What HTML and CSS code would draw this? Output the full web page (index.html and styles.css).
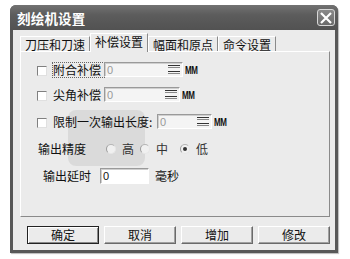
FILE: index.html
```html
<!DOCTYPE html>
<html>
<head>
<meta charset="utf-8">
<link rel="stylesheet" href="styles.css">
</head>
<body>
<div class="window">
  <div class="titlebar">
    <span class="title">刻绘机设置</span>
    <span class="close"><svg width="14" height="12" viewBox="0 0 14 12"><path d="M2 1 L12 11 M12 1 L2 11" stroke="#fff" stroke-width="2.2" fill="none"/></svg></span>
  </div>
  <div class="client">
    <div class="tabs">
      <div class="tab">刀压和刀速</div>
      <div class="tab active">补偿设置</div>
      <div class="tab">幅面和原点</div>
      <div class="tab">命令设置</div>
    </div>
    <div class="panel">
      <div class="watermark"><span class="wm-bag"></span></div>
      <div class="row r1">
        <span class="check"></span>
        <span class="label focus w1">附合补偿</span>
        <span class="field f1"><span class="val">0</span><span class="spin"><i></i><i></i></span></span>
        <span class="unit">MM</span>
      </div>
      <div class="row r2">
        <span class="check"></span>
        <span class="label w1">尖角补偿</span>
        <span class="field f2"><span class="val">0</span><span class="spin"><i></i><i></i></span></span>
        <span class="unit">MM</span>
      </div>
      <div class="row r3">
        <span class="check"></span>
        <span class="label w3">限制一次输出长度:</span>
        <span class="field f3"><span class="val">0</span><span class="spin"><i></i><i></i></span></span>
        <span class="unit">MM</span>
      </div>
      <div class="row r4">
        <span class="label w4">输出精度</span>
        <span class="radio"></span><span class="rlabel">高</span>
        <span class="radio"></span><span class="rlabel wide">中</span>
        <span class="radio on"></span><span class="rlabel">低</span>
      </div>
      <div class="row r5">
        <span class="label w5">输出延时</span>
        <span class="field f5"><span class="val dark">0</span></span>
        <span class="label ms">毫秒</span>
      </div>
    </div>
    <div class="buttons">
      <button class="btn">确定</button>
      <button class="btn">取消</button>
      <button class="btn">增加</button>
      <button class="btn">修改</button>
    </div>
  </div>
</div>
</body>
</html>
```

FILE: styles.css
```css
html, body {
  margin: 0;
  padding: 0;
  background: #ffffff;
  width: 350px;
  height: 259px;
  overflow: hidden;
  font-family: "Noto Sans CJK SC", "Liberation Sans", sans-serif;
  font-size: 12px;
  color: #111;
}
.window {
  margin: 5px 0 0 10px;
  width: 328px;
  height: 248px;
  background: #585858;
  border-radius: 6px 6px 0 0;
  box-sizing: border-box;
  padding: 0 3px 3px 3px;
  display: flex;
  flex-direction: column;
  box-shadow: 1px 1px 1px #bbb;
}
.titlebar {
  height: 25px;
  display: flex;
  align-items: center;
  justify-content: space-between;
  background: linear-gradient(#727272 0%, #5c5c5c 40%, #525252 100%);
  border-radius: 6px 6px 0 0;
  margin: 0 -3px;
  padding-left: 7px;
  padding-right: 3px;
}
.title {
  color: #fff;
  font-weight: bold;
  font-size: 13.5px;
  line-height: 16px;
  letter-spacing: 0.2px;
}
.close {
  width: 18px;
  height: 17px;
  border: 1px solid #d8d8d8;
  border-radius: 3px;
  background: linear-gradient(#8a8a8a, #6a6a6a);
  display: flex;
  align-items: center;
  justify-content: center;
  box-sizing: border-box;
}
.client {
  flex: 1;
  background: #ebebeb;
  padding: 4px 4px 0 7px;
  display: flex;
  flex-direction: column;
  position: relative;
}
.tabs {
  display: flex;
  height: 17px;
  align-items: flex-end;
  position: relative;
  z-index: 2;
}
.tab {
  height: 15px;
  line-height: 15px;
  padding: 0 4px;
  border-top: 1px solid #fff;
  border-left: 1px solid #fff;
  border-right: 1px solid #8a8a8a;
  font-size: 12px;
  color: #111;
  box-sizing: border-box;
  background: #ebebeb;
}
.tab.active {
  height: 19px;
  line-height: 16px;
  margin-bottom: -1px;
}
.panel {
  height: 166px;
  box-sizing: border-box;
  border-top: 1px solid #fff;
  border-left: 1px solid #fff;
  border-right: 1px solid #8a8a8a;
  border-bottom: 1px solid #8a8a8a;
  margin-right: 1px;
  padding: 10px 0 0 16px;
  display: flex;
  flex-direction: column;
  position: relative;
}
.row {
  display: flex;
  align-items: center;
  height: 15px;
  position: relative;
}
.r2 { margin-top: 10px; }
.r3 { margin-top: 12px; }
.r4 { margin-top: 12px; padding-left: 1px; }
.r5 { margin-top: 12px; height: 16px; padding-left: 6px; }
.check {
  width: 10px;
  height: 10px;
  box-sizing: border-box;
  background: #fff;
  border-top: 1px solid #808080;
  border-left: 1px solid #808080;
  border-right: 1px solid #e0e0e0;
  border-bottom: 1px solid #e0e0e0;
  margin-right: 6px;
  margin-top: 2px;
}
.label {
  line-height: 14px;
  white-space: nowrap;
  color: #111;
}
.focus {
  outline: 1px dotted #666;
  outline-offset: 0;
}
.w1 { width: 51px; }
.w3 { width: 104px; }
.w4 { width: 68px; }
.w5 { width: 57px; }
.ms { margin-left: 6px; }
.field {
  height: 15px;
  box-sizing: border-box;
  background: #f4f4f4;
  border-top: 1px solid #9a9a9a;
  border-left: 1px solid #9a9a9a;
  border-right: 1px solid #fff;
  border-bottom: 1px solid #fff;
  box-shadow: inset 1px 1px 0 #cfcfcf;
  display: flex;
  align-items: center;
  justify-content: space-between;
  padding-left: 2px;
}
.f1 { width: 79px; }
.f2 { width: 76px; }
.f3 { width: 55px; }
.f5 { width: 49px; height: 16px; background: #fff; }
.val {
  color: #999;
  font-family: "Liberation Sans", sans-serif;
  font-size: 11px;
  line-height: 12px;
}
.val.dark { color: #111; }
.spin {
  width: 12px;
  height: 11px;
  display: flex;
  flex-direction: column;
  justify-content: space-around;
  margin-right: 2px;
}
.spin i {
  display: block;
  height: 3px;
  border-top: 1px solid #333;
  border-bottom: 1px solid #888;
  box-sizing: border-box;
}
.unit {
  font-family: "Liberation Sans", sans-serif;
  font-size: 8px;
  font-weight: bold;
  letter-spacing: -0.5px;
  margin-left: 2px;
  color: #111;
  transform: scaleY(1.3);
  margin-top: 2px;
}
.radio {
  width: 10px;
  height: 10px;
  border-radius: 50%;
  box-sizing: border-box;
  border: 1px solid #e6e6e6;
  border-left-color: #9a9a9a;
  border-top-color: #b5b5b5;
  background: #f0f0f0;
  margin-right: 6px;
  position: relative;
}
.radio.on::after {
  content: "";
  position: absolute;
  left: 2px;
  top: 2px;
  width: 4px;
  height: 4px;
  border-radius: 50%;
  background: #333;
}
.rlabel {
  margin-right: 6px;
  line-height: 14px;
  color: #333;
}
.rlabel.wide { margin-right: 12px; }
.watermark {
  position: absolute;
  left: 0;
  top: 0;
  width: 100%;
  height: 100%;
  pointer-events: none;
}
.wm-bag {
  position: absolute;
  left: 47px;
  top: 58px;
  width: 77px;
  height: 56px;
  border-radius: 8px;
  background: rgba(0, 0, 0, 0.07);
}
.buttons {
  display: grid;
  grid-template-columns: repeat(4, 72px);
  column-gap: 5px;
  margin-top: 9px;
  padding-left: 7px;
}
.btn {
  height: 18px;
  box-sizing: border-box;
  font-family: "Noto Sans CJK SC", sans-serif;
  font-size: 12px;
  line-height: 14px;
  padding: 0;
  background: #ebebeb;
  color: #111;
  border-top: 1px solid #fff;
  border-left: 1px solid #fff;
  border-right: 1px solid #6a6a6a;
  border-bottom: 1px solid #6a6a6a;
  box-shadow: inset -1px -1px 0 #a0a0a0;
}
.btn:first-child {
  border: 1px solid #222;
  box-shadow: inset 1px 1px 0 #fff, inset -1px -1px 0 #888;
}
```
